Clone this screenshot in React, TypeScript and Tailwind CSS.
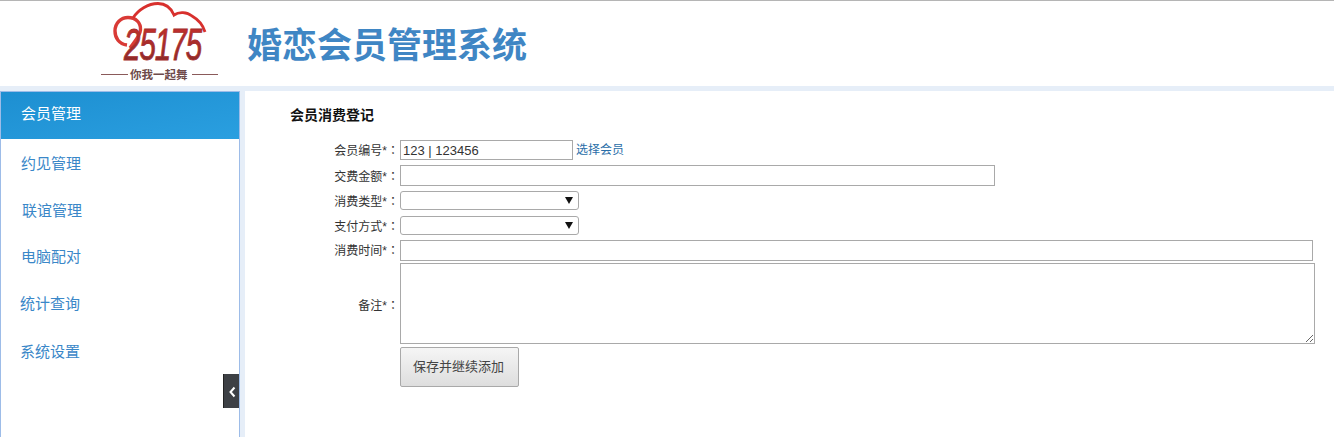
const cjk = "font-['Liberation_Sans','Noto_Sans_CJK_SC',sans-serif]";

const menu = [
  { label: '会员管理', cls: 'h-[47px] pl-[20px] pt-[11px] text-white bg-gradient-to-br from-[#1d8fd1] to-[#2a9fe0]' },
  { label: '约见管理', cls: 'h-[47px] pl-[20px] pt-[14px] text-[#3a87c8]' },
  { label: '联谊管理', cls: 'h-[47px] pl-[21px] pt-[14px] text-[#3a87c8]' },
  { label: '电脑配对', cls: 'h-[46px] pl-[20px] pt-[13px] text-[#3a87c8]' },
  { label: '统计查询', cls: 'h-[48px] pl-[19px] pt-[14px] text-[#3a87c8]' },
  { label: '系统设置', cls: 'h-[47px] pl-[19px] pt-[14px] text-[#3a87c8]' },
];

function Logo() {
  return (
    <svg width="120" height="85" viewBox="0 0 120 85" className="shrink-0">
      <defs>
        <linearGradient id="digits" x1="0" y1="0" x2="0" y2="1">
          <stop offset="0" stopColor="#cf302d" />
          <stop offset="1" stopColor="#7e2a2a" />
        </linearGradient>
      </defs>
      <path
        d="M27 44 C19 43 15 37 15 30 C15 22 21 16.5 28 16.5 C36 16.5 41 22 40.5 29 C40 35 34 41 30 47"
        fill="none"
        stroke="#d93a36"
        strokeWidth="3.4"
      />
      <path
        d="M33 17 C38 9 48 2.5 58 2.5 C66 2.5 71 7 74 14 C79 10.5 87 11 92 15 C99 19 103 24 105 31"
        fill="none"
        stroke="#d8302d"
        strokeWidth="2.8"
      />
      <text
        transform="translate(24 59) scale(0.82 1.22)"
        fontFamily="'Liberation Sans', sans-serif"
        fontStyle="italic"
        fontSize="36"
        letterSpacing="-1.2"
        fill="url(#digits)"
        stroke="#a52c2b"
        strokeWidth="0.7"
      >
        25175
      </text>
      <line x1="1" y1="73.5" x2="28" y2="73.5" stroke="#8a5a5a" strokeWidth="1" />
      <line x1="92" y1="73.5" x2="118" y2="73.5" stroke="#8a5a5a" strokeWidth="1" />
      <text
        x="30"
        y="78"
        fontFamily="'Noto Sans CJK SC', sans-serif"
        fontSize="11.5"
        fontWeight="700"
        fill="#6e4a4a"
      >
        你我一起舞
      </text>
    </svg>
  );
}

function Row({
  label,
  className,
  labelClass = '',
  children,
}: {
  label: string;
  className: string;
  labelClass?: string;
  children: React.ReactNode;
}) {
  return (
    <div className={`flex items-center ${className}`}>
      <label className={`w-[110px] pr-[1px] text-right text-[12px] text-[#333] whitespace-nowrap ${labelClass}`}>
        {label}
        <span className="font-['Noto_Sans_CJK_TC']">：</span>
      </label>
      {children}
    </div>
  );
}

function Select({ className }: { className: string }) {
  return (
    <div className={`relative w-[179px] ${className}`}>
      <select className="block h-full w-full appearance-none rounded-[3px] border border-[#a9a9a9] bg-white" />
      <svg width="8" height="7" viewBox="0 0 8 7" className="absolute right-[6px] top-[6px]">
        <path d="M0 0H8L4 7Z" fill="#111" />
      </svg>
    </div>
  );
}

export default function App() {
  return (
    <div className={`flex h-[437px] flex-col overflow-hidden bg-white ${cjk}`}>
      <header className="flex h-[86px] shrink-0 items-start border-t border-[#b5b5b5] pl-[100px]">
        <Logo />
        <h1 className="ml-[27px] mt-[20px] text-[35px] leading-[50px] font-bold text-[#3f86c4]">婚恋会员管理系统</h1>
      </header>
      <div className="flex min-h-0 flex-1 bg-[#e6eef8] pt-[5px]">
        <aside className="relative w-[240px] shrink-0 border-x border-t border-[#9dbce8] bg-white text-[15px] leading-[22px]">
          {menu.map((m) => (
            <div key={m.label} className={m.cls}>
              {m.label}
            </div>
          ))}
          <div className="absolute bottom-[29px] right-0 flex h-[34px] w-[16px] items-center justify-center border-l border-[#222] bg-[#3d4045] pl-[1px] pt-[1px]">
            <svg width="7" height="12" viewBox="0 0 7 12">
              <path d="M5.5 1.5L1.5 6L5.5 10.5" fill="none" stroke="#fff" strokeWidth="2" />
            </svg>
          </div>
        </aside>
        <main className="ml-[5px] flex-1 bg-white pl-[45px]">
          <h2 className="mt-[13px] text-[14px] leading-[22px] font-bold text-[#111]">会员消费登记</h2>
          <div className="mt-[14px] flex flex-col">
            <Row label="会员编号*" className="h-[20px]">
              <input
                readOnly
                value="123 | 123456"
                className="h-[20px] w-[173px] border border-[#a9a9a9] px-[2px] text-[13px] text-[#333] font-['Liberation_Sans']"
              />
              <a className="ml-[3px] text-[12px] text-[#2a6ea8]">选择会员</a>
            </Row>
            <Row label="交费金额*" className="mt-[5px] h-[21px]" labelClass="pt-[2px]">
              <input className="h-[21px] w-[595px] border border-[#a9a9a9]" />
            </Row>
            <Row label="消费类型*" className="mt-[5px] h-[19px]" labelClass="pt-[2px]">
              <Select className="h-[19px]" />
            </Row>
            <Row label="支付方式*" className="mt-[6px] h-[19px]" labelClass="pt-[2px]">
              <Select className="h-[19px]" />
            </Row>
            <Row label="消费时间*" className="mt-[5px] h-[21px]">
              <input className="h-[21px] w-[913px] border border-[#a9a9a9]" />
            </Row>
            <Row label="备注*" className="mt-[2px] h-[81px]" labelClass="pt-[4px]">
              <textarea className="h-[81px] w-[915px] border border-[#a9a9a9]" />
            </Row>
            <div className="mt-[3px] pl-[110px]">
              <button className="h-[40px] w-[119px] rounded-[2px] border border-[#a9a9a9] bg-gradient-to-b from-[#f5f5f5] to-[#dedede] pr-[2px] text-[13px] text-[#444]">
                保存并继续添加
              </button>
            </div>
          </div>
        </main>
      </div>
    </div>
  );
}
